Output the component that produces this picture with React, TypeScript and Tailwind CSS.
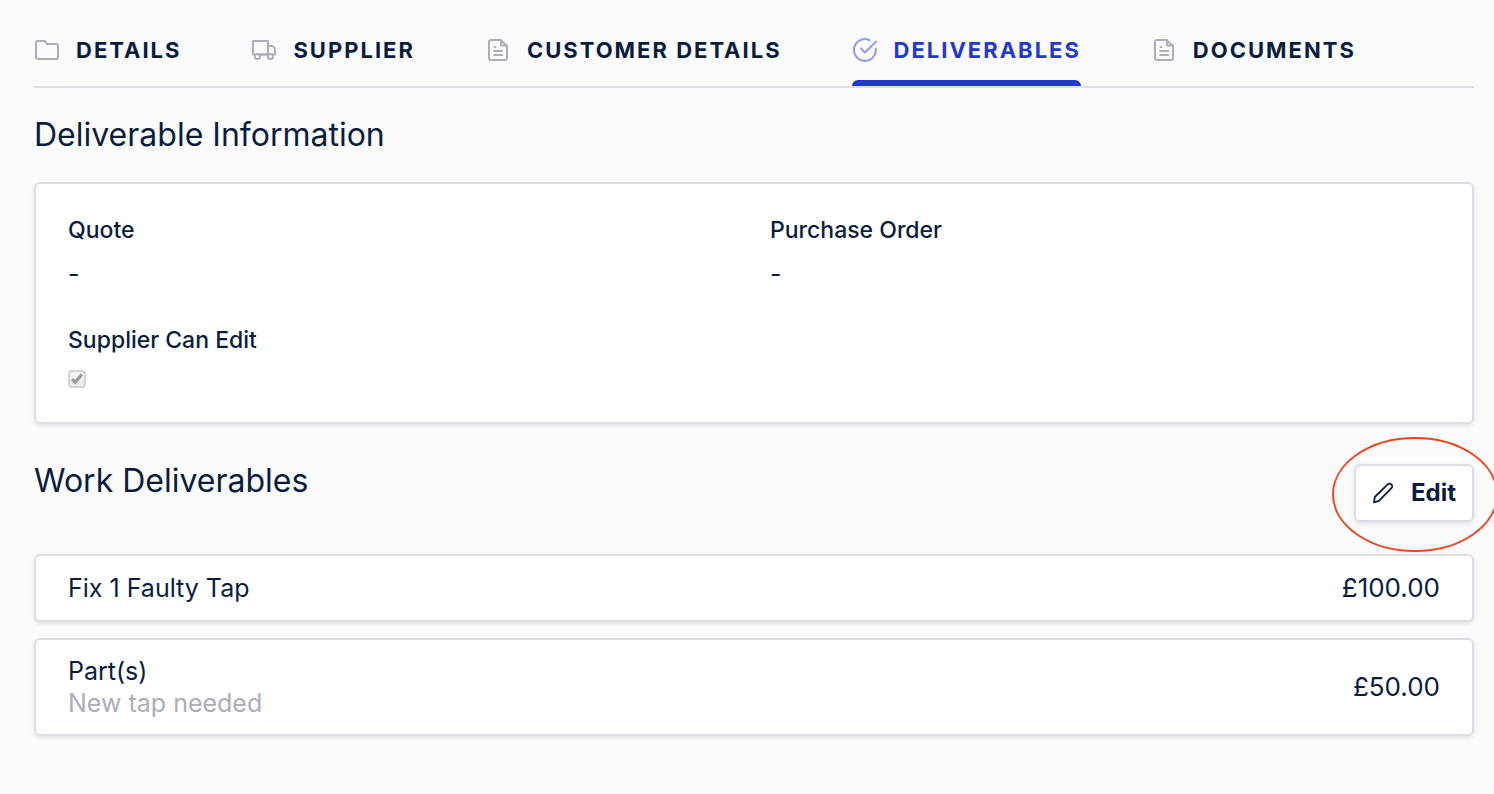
import type { ReactNode } from 'react'

type IconName = 'folder' | 'truck' | 'document' | 'check'

interface Tab {
  label: string
  icon: IconName
  active?: boolean
}

interface Deliverable {
  title: string
  note?: string
  price: string
}

const TABS: Tab[] = [
  { label: 'Details', icon: 'folder' },
  { label: 'Supplier', icon: 'truck' },
  { label: 'Customer Details', icon: 'document' },
  { label: 'Deliverables', icon: 'check', active: true },
  { label: 'Documents', icon: 'document' },
]

const DELIVERABLES: Deliverable[] = [
  { title: 'Fix 1 Faulty Tap', price: '£100.00' },
  { title: 'Part(s)', note: 'New tap needed', price: '£50.00' },
]

const ICON_PATHS: Record<IconName, ReactNode> = {
  folder: (
    <path d="M4 4h6.2a1.5 1.5 0 0 1 1.3.7L13 7h9a2 2 0 0 1 2 2v11a2 2 0 0 1-2 2H4a2 2 0 0 1-2-2V6a2 2 0 0 1 2-2z" />
  ),
  truck: (
    <>
      <path d="M3.8 17.5H2V4h15v13.5H9" />
      <path d="M17 9h3a4 4 0 0 1 4 4v4.5h-2M16.8 17.5H9" />
      <circle cx="6.4" cy="19.5" r="2.6" />
      <circle cx="19.4" cy="19.5" r="2.6" />
    </>
  ),
  document: (
    <>
      <path d="M15.5 3H6a2 2 0 0 0-2 2v16a2 2 0 0 0 2 2h14a2 2 0 0 0 2-2V9z" />
      <path d="M16 3.2V8.5h5.6" />
      <path d="M9.6 10h.8M9.2 14h8M9.2 18h8" />
    </>
  ),
  check: (
    <>
      <path d="M23.7 11.5a10.9 10.9 0 1 1-6.2-8.4" />
      <path d="M9 11.5l3.9 4L24 4.6" />
    </>
  ),
}

function TabIcon({ name }: { name: IconName }) {
  return (
    <svg
      viewBox="0 0 26 26"
      fill="none"
      stroke="currentColor"
      strokeWidth="2"
      strokeLinecap="round"
      strokeLinejoin="round"
      className="size-[26px] shrink-0"
      aria-hidden="true"
    >
      {ICON_PATHS[name]}
    </svg>
  )
}

function Card({ className, children }: { className: string; children: ReactNode }) {
  return (
    <div className={`rounded-md border-2 border-[#dddde5] bg-white px-8 shadow-[0_2px_4px_rgba(0,0,0,0.1)] ${className}`}>
      {children}
    </div>
  )
}

function Field({ label, value }: { label: string; value: string }) {
  return (
    <div>
      <dt className="text-[23px] leading-7 font-medium">{label}</dt>
      <dd className="mt-4 text-[25px] leading-7">{value}</dd>
    </div>
  )
}

export default function App() {
  return (
    <div className="min-h-screen overflow-hidden bg-[#fbfbfb] pr-5 pb-12 pl-[34px] font-['Inter',sans-serif] text-[#0b1d3d]">
      {/* Tabs */}
      <nav className="flex gap-[70px] border-b-2 border-[#dddde2] pt-9">
        {TABS.map(tab => (
          <a
            key={tab.label}
            href="#"
            aria-current={tab.active ? 'page' : undefined}
            className={tab.active ? 'text-[#2338d0]' : ''}
          >
            <span className="flex h-7 items-center gap-4">
              <span className={tab.active ? 'text-[#919be7]' : 'text-[#adadbc]'}>
                <TabIcon name={tab.icon} />
              </span>
              <span className="text-[22px] leading-7 font-bold tracking-[2px] whitespace-nowrap uppercase">
                {tab.label}
              </span>
            </span>
            <span className={`mt-4 block h-1.5 rounded-t-md ${tab.active ? 'bg-[#2338d0]' : ''}`} />
          </a>
        ))}
      </nav>

      <main>
        {/* Deliverable information */}
        <section>
          <h2 className="my-[30px] text-[32px] leading-[34px]">Deliverable Information</h2>
          <Card className="py-8">
            <dl className="grid grid-cols-2 gap-x-8">
              <Field label="Quote" value="-" />
              <Field label="Purchase Order" value="-" />
            </dl>
            <div className="mt-[38px]">
              <label htmlFor="supplier-can-edit" className="block text-[23px] leading-7 font-medium">
                Supplier Can Edit
              </label>
              <div className="mt-4 grid h-5 w-[18px] items-start">
                <input
                  id="supplier-can-edit"
                  type="checkbox"
                  checked
                  disabled
                  className="col-start-1 row-start-1 size-[18px] appearance-none rounded-[4px] border-2 border-[#d2d2d2] bg-linear-to-b from-[#f5f5f5] to-[#ececec]"
                />
                <svg viewBox="0 0 18 18" className="pointer-events-none col-start-1 row-start-1 size-[18px]" aria-hidden="true">
                  <path d="M4 9.2l3.2 3L14 4.4" fill="none" stroke="#9a9a9a" strokeWidth="3.2" />
                </svg>
              </div>
            </div>
          </Card>
        </section>

        {/* Work deliverables */}
        <section className="mt-10">
          <div className="flex items-start justify-between">
            <h2 className="text-[32px] leading-[34px]">Work Deliverables</h2>
            <div className="relative">
              <button
                type="button"
                className="flex h-[58px] items-center gap-[15px] rounded-md border-2 border-[#dddde5] bg-white pr-4 pl-3.5 text-2xl font-bold shadow-[0_2px_4px_rgba(0,0,0,0.1)]"
              >
                <svg
                  viewBox="0 0 26 26"
                  fill="none"
                  stroke="currentColor"
                  strokeWidth="1.8"
                  strokeLinejoin="round"
                  className="size-[26px]"
                  aria-hidden="true"
                >
                  <path d="M4 22.4l.8-5.4L17.6 4.4a2.6 2.6 0 0 1 3.8 0 2.6 2.6 0 0 1 0 3.8L9 20.8z" />
                </svg>
                Edit
              </button>
              {/* Hand-drawn highlight ring */}
              <svg
                viewBox="0 0 166 116"
                className="pointer-events-none absolute -top-[27px] -left-[22px] h-[116px] w-[166px] max-w-none"
                aria-hidden="true"
              >
                <ellipse cx="83" cy="57.5" rx="82" ry="56.5" fill="none" stroke="#ee4423" strokeWidth="2" />
              </svg>
            </div>
          </div>

          <ul className="mt-8 flex flex-col gap-4">
            {DELIVERABLES.map(item => (
              <li key={item.title}>
                <Card className="flex min-h-[68px] items-center justify-between py-[15px] leading-8">
                  <div className="text-[25px] leading-8">
                    <p>{item.title}</p>
                    {item.note && <p className="text-[#adadbc]">{item.note}</p>}
                  </div>
                  <p className="text-[26px] leading-8">{item.price}</p>
                </Card>
              </li>
            ))}
          </ul>
        </section>
      </main>
    </div>
  )
}
